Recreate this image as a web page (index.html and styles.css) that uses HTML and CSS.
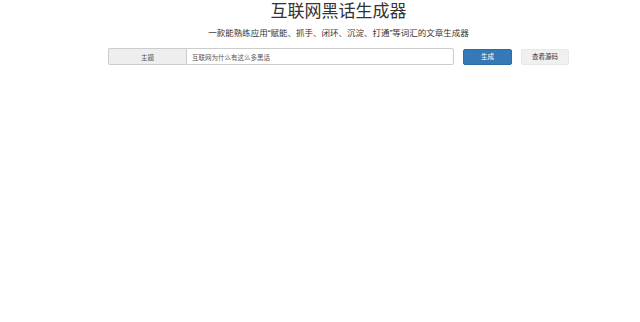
FILE: index.html
```html
<!DOCTYPE html>
<html lang="zh-CN">
<head>
<meta charset="utf-8">
<title>互联网黑话生成器</title>
<link rel="stylesheet" href="styles.css">
</head>
<body>
<div class="container">
  <h1 class="title">互联网黑话生成器</h1>
  <h4 class="subtitle">一款能熟练应用“赋能、抓手、闭环、沉淀、打通”等词汇的文章生成器</h4>
  <div class="controls">
    <div class="input-group">
      <span class="addon">主题</span>
      <input class="field" type="text" value="互联网为什么有这么多黑话">
    </div>
    <button class="btn btn-primary">生成</button>
    <button class="btn btn-default">查看源码</button>
  </div>
</div>
</body>
</html>
```
FILE: styles.css
```css
html, body {
  margin: 0;
  padding: 0;
  background: #fff;
}
body {
  font-family: "Liberation Sans", "Noto Sans CJK SC", sans-serif;
  color: #333;
}
.container {
  width: 461px;
  margin-left: 108px;
}
.title {
  margin: 0;
  padding-top: 2px;
  font-size: 17px;
  line-height: 20px;
  font-weight: 400;
  text-align: center;
  color: #333;
}
.subtitle {
  margin: 6px 0 0;
  font-size: 8.5px;
  line-height: 11px;
  font-weight: 400;
  text-align: center;
  color: #333;
}
.controls {
  display: flex;
  align-items: center;
  margin-top: 9px;
}
.input-group {
  display: flex;
  width: 346px;
  height: 17px;
}
.addon {
  box-sizing: border-box;
  width: 78px;
  display: flex;
  align-items: center;
  justify-content: center;
  background: #eee;
  border: 1px solid #ccc;
  border-right: 0;
  border-radius: 2px 0 0 2px;
  font-size: 6.5px;
  color: #555;
}
.field {
  box-sizing: border-box;
  flex: 1;
  min-width: 0;
  height: 17px;
  margin: 0;
  padding: 0 5px;
  border: 1px solid #ccc;
  border-radius: 0 2px 2px 0;
  font-family: "Liberation Sans", "Noto Sans CJK SC", sans-serif;
  font-size: 6.5px;
  color: #555;
  outline: none;
}
.btn {
  box-sizing: border-box;
  height: 16px;
  padding: 0;
  border-radius: 2px;
  font-family: "Liberation Sans", "Noto Sans CJK SC", sans-serif;
  font-size: 6.5px;
  line-height: 14px;
}
.btn-primary {
  width: 49px;
  margin-left: 9px;
  background: #337ab7;
  border: 1px solid #2e6da4;
  color: #fff;
}
.btn-default {
  width: 48px;
  margin-left: 9px;
  background: #f0f0f0;
  border: 1px solid #e8e8e8;
  color: #333;
}
```
